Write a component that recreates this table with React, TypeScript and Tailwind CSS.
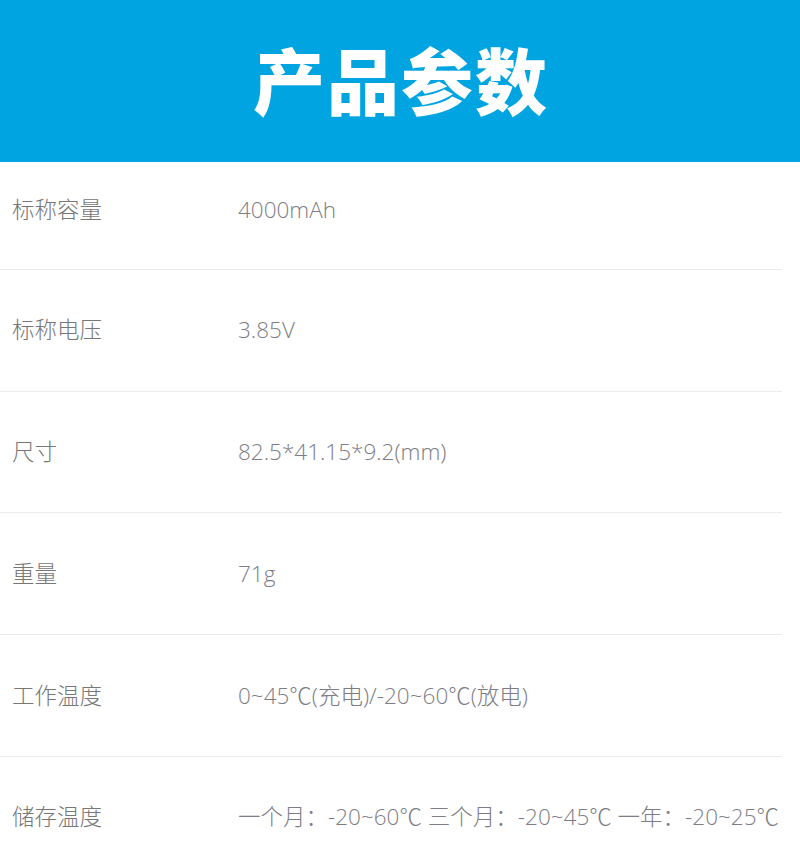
const rows = [
  { label: "标称容量", value: "4000mAh" },
  { label: "标称电压", value: "3.85V" },
  { label: "尺寸", value: "82.5*41.15*9.2(mm)" },
  { label: "重量", value: "71g" },
  { label: "工作温度", value: "0~45℃(充电)/-20~60℃(放电)" },
  { label: "储存温度", value: "一个月：-20~60℃ 三个月：-20~45℃ 一年：-20~25℃" },
];

export default function App() {
  return (
    <div className="h-[862px] w-[800px] overflow-hidden bg-white font-['Open_Sans','Noto_Sans_CJK_SC',sans-serif]">
      <div className="flex h-[162px] items-center justify-center bg-[#00a4e1]">
        <h1 className="pb-[6px] pl-[2px] font-['Noto_Sans_CJK_SC',sans-serif] text-[72px] font-black leading-none tracking-[2px] text-white">
          产品参数
        </h1>
      </div>
      <div className="w-[782px]">
        {rows.map((row, i) => (
          <div
            key={row.label}
            className={
              "flex items-center border-b border-[#ebebeb] text-[22.5px] font-light text-[#777] " +
              (i === 0 ? "h-[108px] pb-[12px]" : "h-[121.7px]")
            }
          >
            <div className="w-[238px] shrink-0 pl-[12px]">{row.label}</div>
            <div className="whitespace-nowrap text-[#7d7d86]">{row.value}</div>
          </div>
        ))}
      </div>
    </div>
  );
}
